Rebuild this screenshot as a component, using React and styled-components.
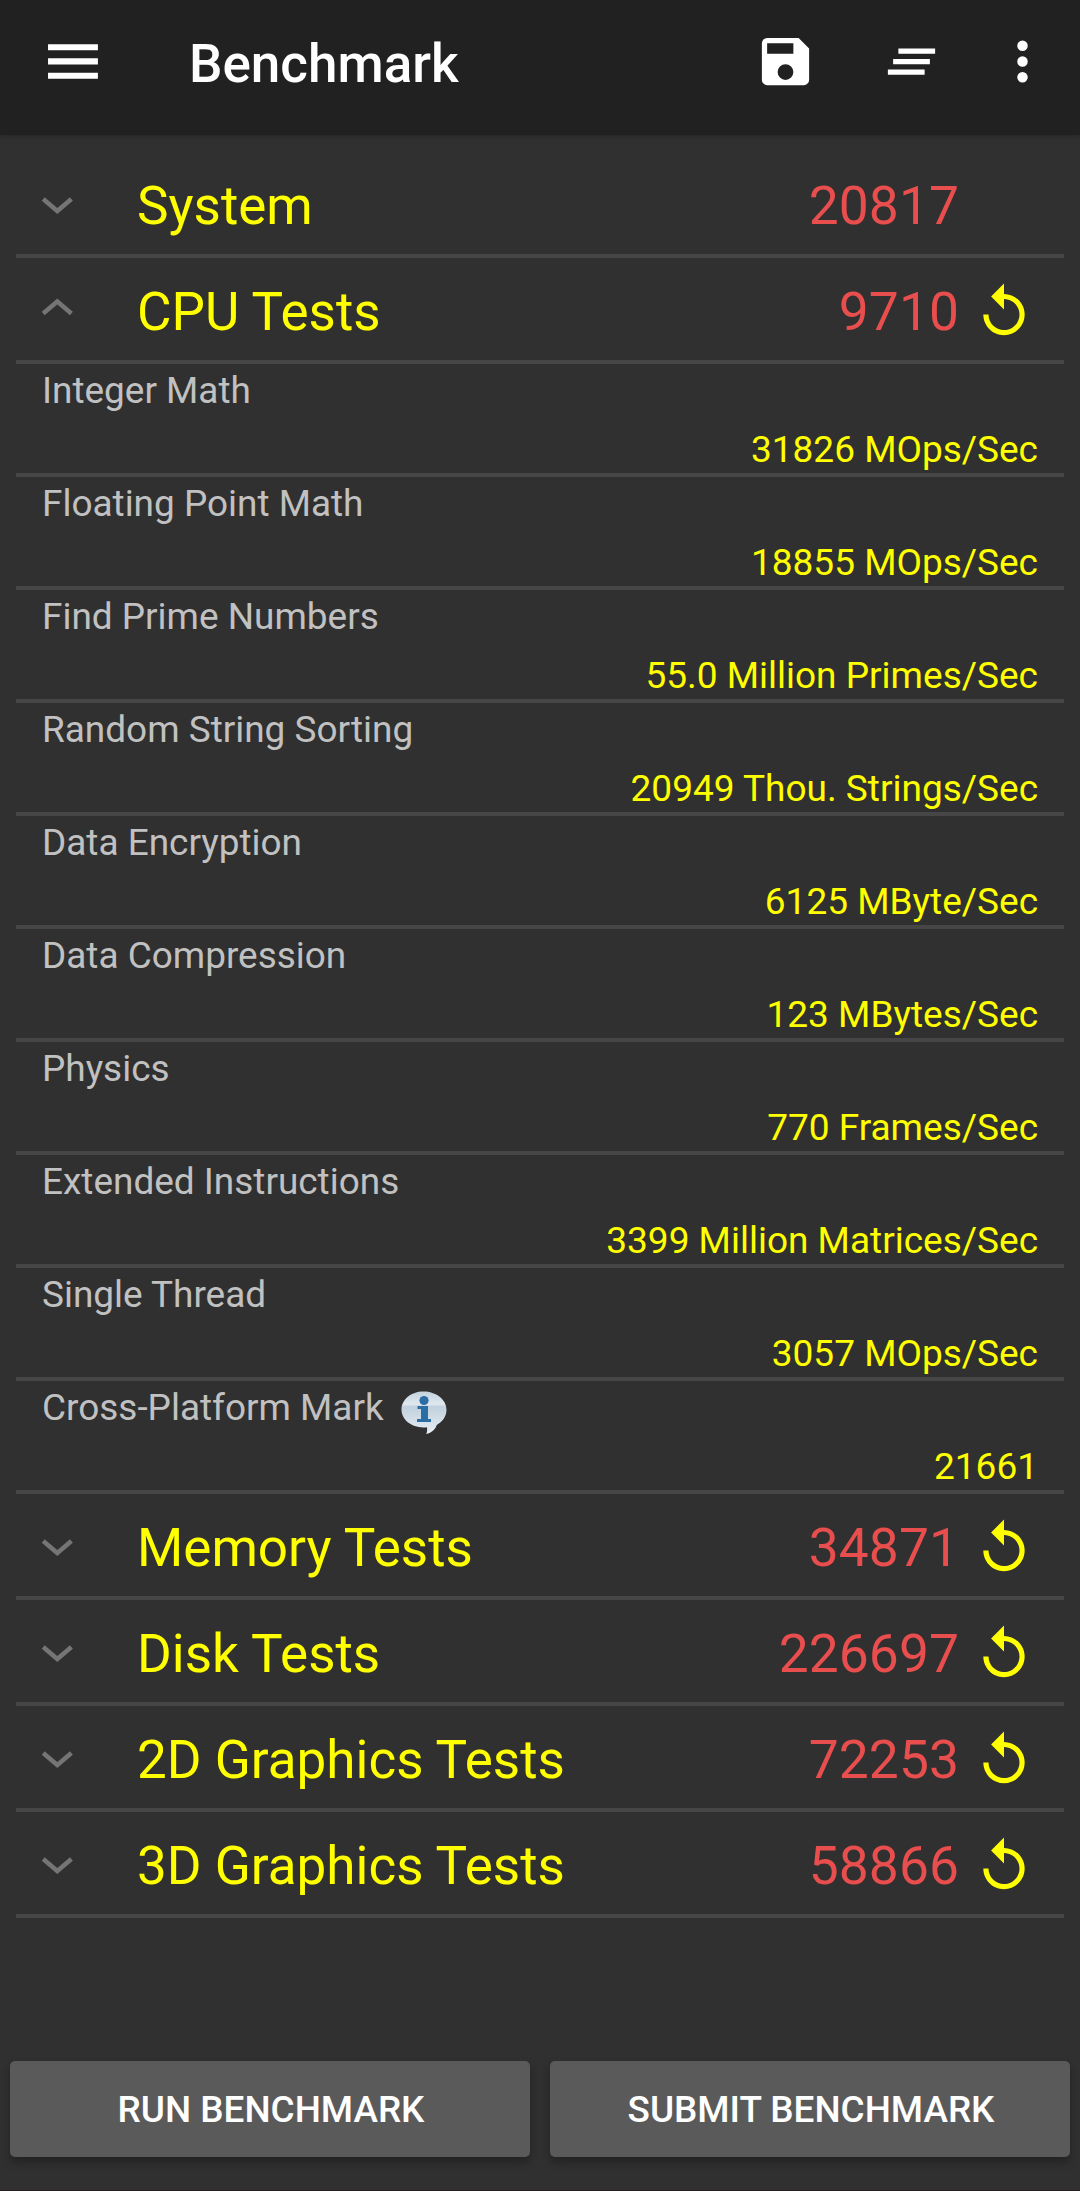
import React from "react";
import styled, { createGlobalStyle } from "styled-components";

const Global = createGlobalStyle`
  *, *::before, *::after { box-sizing: border-box; }
  body { margin: 0; background: #303030; }
  button { font: inherit; color: inherit; border: 0; background: none; padding: 0; }
`;

const Screen = styled.div`
  display: flex;
  flex-direction: column;
  width: 1080px;
  height: 2191px;
  background: #303030;
  border-bottom: 1px solid #241f20;
  font-family: Roboto, sans-serif;
`;

const Toolbar = styled.header`
  display: flex;
  align-items: flex-start;
  height: 135px;
  padding: 30px 26px 0 42px;
  background: #212121;
  box-shadow: 0 1px 4px rgba(0, 0, 0, 0.25);
`;

const IconButton = styled.button`
  display: flex;
  flex: none;
  margin-right: ${(p) => p.$gap || 0}px;
  color: #fff;
`;

const Title = styled.h1`
  flex: 1;
  margin: 0;
  padding-top: 1px;
  font-size: 53px;
  line-height: 66px;
  font-weight: 500;
  color: #fff;
`;

const Content = styled.main`
  flex: 1;
  padding: 17px 16px 0;
`;

const GroupRow = styled.div`
  display: flex;
  align-items: center;
  height: 106px;
  padding: 5px 29px 0 9px;
  border-bottom: 4px solid #464646;
`;

const GroupName = styled.div`
  flex: 1;
  margin-left: 48px;
  font-size: 53px;
  line-height: 62px;
  color: #ffff00;
`;

const Score = styled.div`
  font-size: 53.3px;
  letter-spacing: 0.1px;
  line-height: 62px;
  color: #e84e4e;
`;

const ActionSlot = styled.div`
  display: flex;
  justify-content: center;
  width: 63px;
  margin-left: 13px;
`;

const TestRow = styled.div`
  display: flex;
  flex-direction: column;
  justify-content: space-between;
  height: 113px;
  padding: 5px 26px 2px 26px;
  border-bottom: 4px solid #464646;
`;

const TestName = styled.div`
  display: flex;
  gap: 16px;
  height: 43px;
  font-size: 36.95px;
  line-height: 43px;
  color: #c1c1c1;
`;

const TestValue = styled.div`
  font-size: 37px;
  line-height: 43px;
  text-align: right;
  color: #ffff00;
`;

const ButtonBar = styled.footer`
  display: flex;
  gap: 20px;
  height: 129px;
  padding: 0 10px;
`;

const BarButton = styled.button`
  flex: 1;
  height: 96px;
  border-radius: 5px;
  background: #5a5a5b;
  box-shadow: 0 5px 8px rgba(0, 0, 0, 0.3);
  color: #fff;
  && { font-size: 36.9px; font-weight: 500; padding: 1px 0 0 2px; }
`;

const MenuIcon = () => (
  <svg width="63" height="63" viewBox="0 0 24 24" fill="currentColor">
    <path d="M2.3 5.4h19v2.3h-19zM2.3 10.8h19v2.3h-19zM2.3 16.3h19v2.3h-19z" />
  </svg>
);

const SaveIcon = () => (
  <svg width="63" height="63" viewBox="0 0 24 24" fill="currentColor">
    <path d="M17 3H5a2 2 0 0 0-2 2v14a2 2 0 0 0 2 2h14a2 2 0 0 0 2-2V7l-4-4zm-5 16a3 3 0 1 1 0-6 3 3 0 0 1 0 6zm3-10H5V5h10v4z" />
  </svg>
);

const ClearAllIcon = () => (
  <svg width="63" height="63" viewBox="0 0 24 24" fill="currentColor">
    <path d="M5 13h14v-2H5v2zm-2 4h14v-2H3v2zM7 7v2h14V7H7z" />
  </svg>
);

const MoreIcon = () => (
  <svg width="63" height="63" viewBox="0 0 24 24" fill="currentColor">
    <path d="M12 8a2 2 0 1 0 0-4 2 2 0 0 0 0 4zm0 2a2 2 0 1 0 0 4 2 2 0 0 0 0-4zm0 6a2 2 0 1 0 0 4 2 2 0 0 0 0-4z" />
  </svg>
);

const ReplayIcon = () => (
  <svg width="62" height="62" viewBox="0 0 24 24" fill="#ffff00">
    <path d="M12 5V1L7 6l5 5V7c3.31 0 6 2.69 6 6s-2.69 6-6 6-6-2.69-6-6H4c0 4.42 3.58 8 8 8s8-3.58 8-8-3.58-8-8-8z" />
  </svg>
);

const Chevron = ({ open }) => (
  <svg width="64" height="63" viewBox="0 0 64 63" fill="none" stroke="#757575" strokeWidth="4.5">
    <path d={open ? "M18.200 33.500L32.300 21.500L46.400 33.500" : "M18.200 25L32.300 37L46.400 25"} />
  </svg>
);

const InfoSvg = styled.svg`
  margin-top: 3.5px;
`;

const InfoIcon = () => (
  <InfoSvg width="48" height="46" viewBox="0 0 48 46">
    <defs>
      <linearGradient id="bubble" x1="0" y1="0" x2="0" y2="1">
        <stop offset="0" stopColor="#c3d3de" />
        <stop offset="0.3" stopColor="#dfe8ee" />
        <stop offset="0.36" stopColor="#c0d0dc" />
        <stop offset="1" stopColor="#e9eff5" />
      </linearGradient>
    </defs>
    <path d="M23.500 1.500C11 1.500 1.500 9.500 1.500 19.500S11 37.300 23.500 37.500c1.500 0 2.500 0 3.500-.2.300 2.500.3 4.700-.8 6.700 5.500-1.200 9-4.500 10.500-9C43 31.500 46.500 26 46.500 19.500 46.500 9.500 36 1.500 23.500 1.500z" fill="url(#bubble)" />
    <circle cx="24" cy="10.500" r="4.600" fill="#2b6ea6" />
    <path d="M17.500 16h10.500v13h3v3H17v-3h4V19h-3.500z" fill="#2b6ea6" />
  </InfoSvg>
);

const cpuTests = [
  ["Integer Math", "31826 MOps/Sec"],
  ["Floating Point Math", "18855 MOps/Sec"],
  ["Find Prime Numbers", "55.0 Million Primes/Sec"],
  ["Random String Sorting", "20949 Thou. Strings/Sec"],
  ["Data Encryption", "6125 MByte/Sec"],
  ["Data Compression", "123 MBytes/Sec"],
  ["Physics", "770 Frames/Sec"],
  ["Extended Instructions", "3399 Million Matrices/Sec"],
  ["Single Thread", "3057 MOps/Sec"],
  ["Cross-Platform Mark", "21661", true],
];

const groups = [
  { name: "System", score: "20817" },
  { name: "CPU Tests", score: "9710", replay: true, tests: cpuTests },
  { name: "Memory Tests", score: "34871", replay: true },
  { name: "Disk Tests", score: "226697", replay: true },
  { name: "2D Graphics Tests", score: "72253", replay: true },
  { name: "3D Graphics Tests", score: "58866", replay: true },
];

export default function App() {
  return (
    <Screen>
      <Global />
      <Toolbar>
        <IconButton $gap={84} aria-label="Menu"><MenuIcon /></IconButton>
        <Title>Benchmark</Title>
        <IconButton $gap={63} aria-label="Save"><SaveIcon /></IconButton>
        <IconButton $gap={48} aria-label="Clear all"><ClearAllIcon /></IconButton>
        <IconButton aria-label="More"><MoreIcon /></IconButton>
      </Toolbar>
      <Content>
        {groups.map((g) => (
          <React.Fragment key={g.name}>
            <GroupRow>
              <Chevron open={!!g.tests} />
              <GroupName>{g.name}</GroupName>
              <Score>{g.score}</Score>
              <ActionSlot>{g.replay && <ReplayIcon />}</ActionSlot>
            </GroupRow>
            {g.tests?.map(([name, value, info]) => (
              <TestRow key={name}>
                <TestName>{name}{info && <InfoIcon />}</TestName>
                <TestValue>{value}</TestValue>
              </TestRow>
            ))}
          </React.Fragment>
        ))}
      </Content>
      <ButtonBar>
        <BarButton>RUN BENCHMARK</BarButton>
        <BarButton>SUBMIT BENCHMARK</BarButton>
      </ButtonBar>
    </Screen>
  );
}
